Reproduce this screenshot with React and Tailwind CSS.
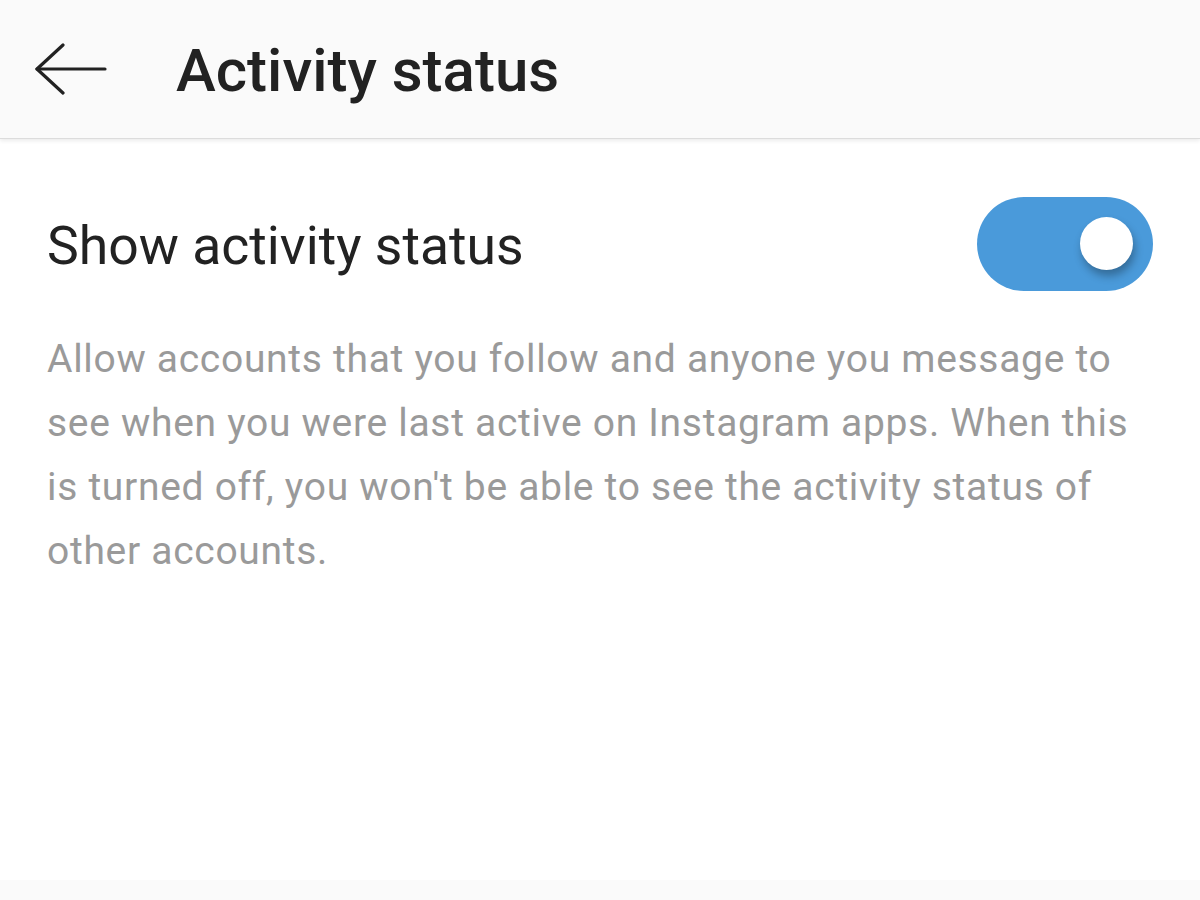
import React from "react";

function BackArrow() {
  return (
    <svg width="76" height="56" viewBox="0 0 76 56" fill="none" stroke="#222" strokeWidth="3.2" strokeLinecap="round" strokeLinejoin="round">
      <path d="M3 26H71" />
      <path d="M29 2L3 26L29 50" />
    </svg>
  );
}

function Toggle({ on }) {
  return (
    <div className="relative w-[176px] h-[94px] rounded-full bg-[#4a9ada] shrink-0">
      <div
        className={`absolute top-[20px] w-[53px] h-[53px] rounded-full bg-white shadow-[2px_6px_9px_rgba(0,0,0,0.3)] ${on ? "right-[20px]" : "left-[20px]"}`}
      />
    </div>
  );
}

export default function App() {
  return (
    <div className="w-[1200px] h-[900px] flex flex-col bg-white font-['Roboto',_sans-serif] overflow-hidden">
      <div className="h-[139px] shrink-0 bg-[#fafafa] flex items-center border-b border-[#dcdcdc] shadow-[0_2px_4px_rgba(0,0,0,0.08)] relative z-10">
        <div className="pl-[34px] pt-[4px] w-[176px] flex items-center">
          <BackArrow />
        </div>
        <h1 className="text-[60px] font-medium text-[#222] leading-none mt-[4px]">Activity status</h1>
      </div>

      <div className="flex-1 px-[47px] pt-[58px]">
        <div className="flex items-center justify-between">
          <span className="text-[53.5px] text-[#222] leading-none mt-[4px]">Show activity status</span>
          <Toggle on />
        </div>
        <p className="mt-[36px] text-[39px] tracking-[0.7px] leading-[64px] text-[#9a9a9a]">
          Allow accounts that you follow and anyone you message to see when you were last active on Instagram apps. When this is turned off, you won't be able to see the activity status of other accounts.
        </p>
      </div>

      <div className="h-[20px] shrink-0 bg-[#fafafa]" />
    </div>
  );
}
